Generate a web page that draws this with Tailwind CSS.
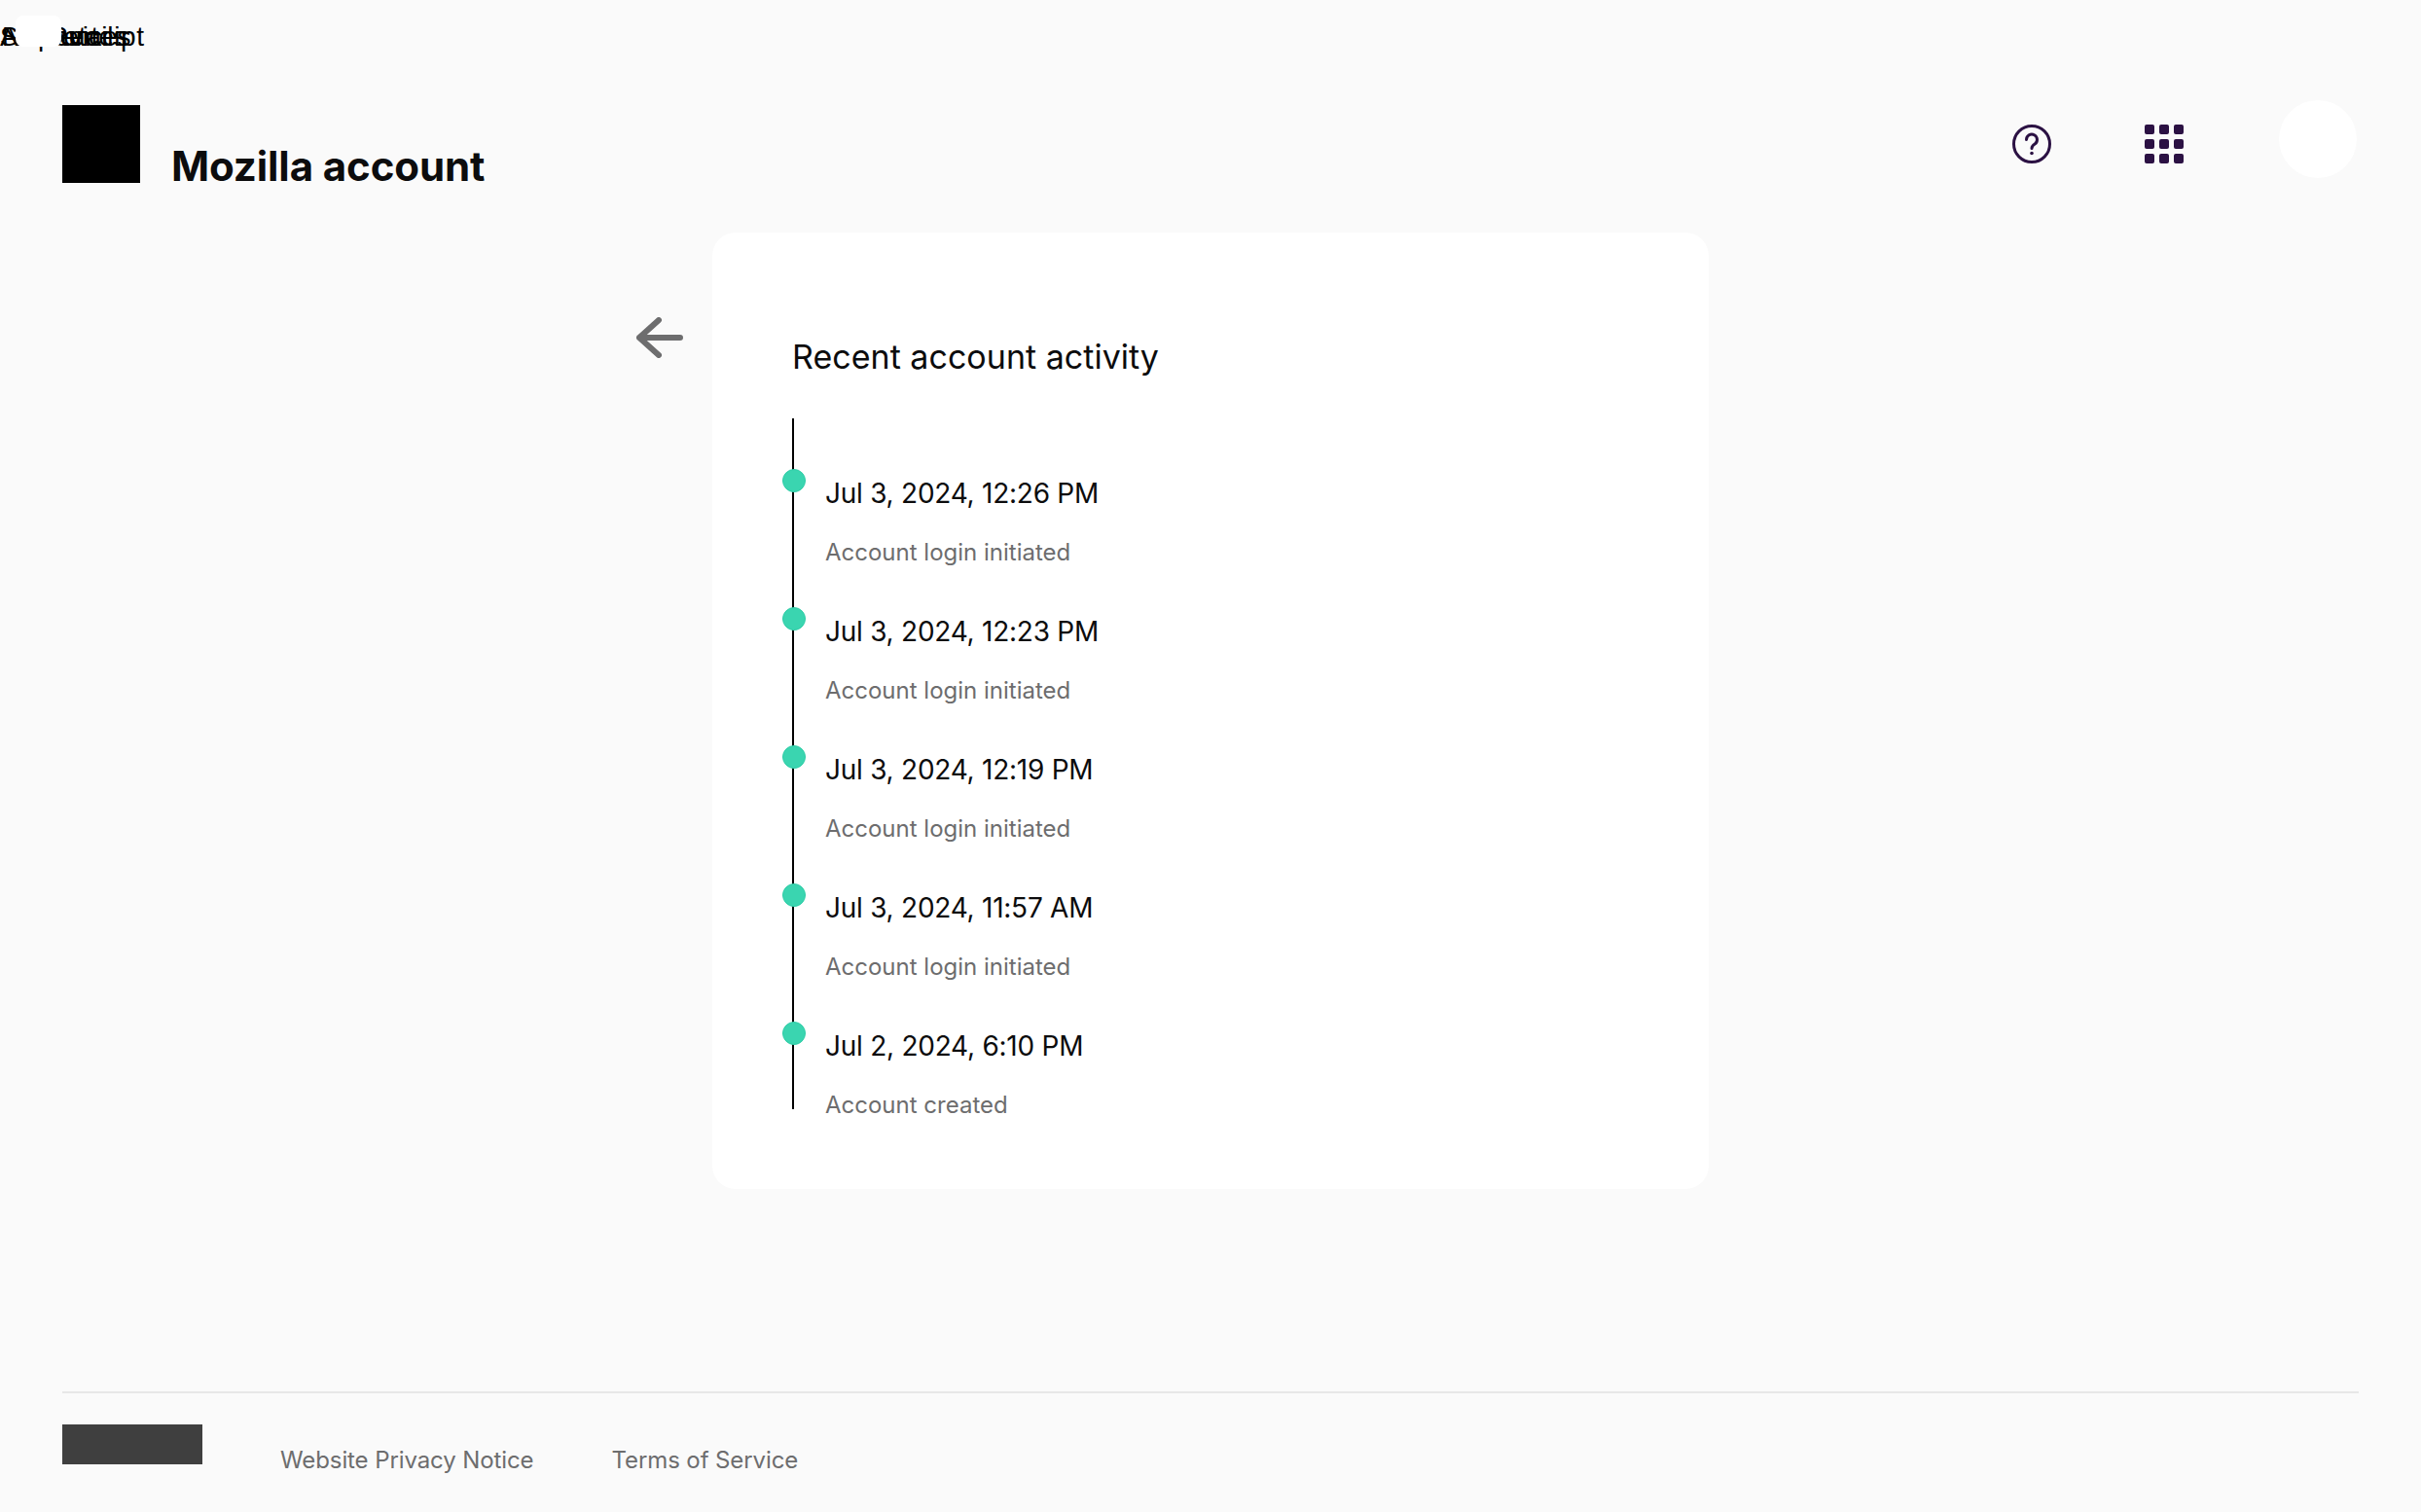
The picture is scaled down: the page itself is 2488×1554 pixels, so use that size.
<!DOCTYPE html>
<html lang="en">
<head>
    <meta charset="UTF-8">
    <script src="https://cdn.jsdelivr.net/npm/@tailwindcss/browser@4"></script>
    <title>Mozilla account</title>
</head>
<body class="h-screen overflow-hidden flex flex-col bg-[#fafafa] font-['Inter',sans-serif] text-[#0c0c0d]">
    <!-- skip links, stacked on top of each other -->
    <div class="absolute left-0 top-[26px] h-[24px] w-[160px] whitespace-nowrap font-['Liberation_Sans',sans-serif] text-[28px] leading-[24px] text-black">
        <span class="absolute left-0 top-0">Account</span>
        <span class="absolute left-[2px] top-0">Nav</span>
        <span class="absolute left-0 top-0">Skip</span>
        <span class="absolute left-[45px] top-0">Details</span>
        <span class="absolute left-[35px] top-0">Devices</span>
        <span class="absolute left-[50px] top-0 tracking-[0.5px]">Receipt</span>
        <div class="absolute left-[16px] top-[-10px] w-[47px] h-[32px] bg-white rounded-lg"></div>
    </div>

    <header class="flex items-start justify-between pl-[64px] pr-[66px] pt-[103px] h-[239px]">
        <div class="flex items-start gap-[32px] pt-[5px]">
            <div class="w-[80px] h-[80px] bg-black"></div>
            <h1 class="text-[42px] leading-[52px] font-bold mt-[37px] tracking-[-0.1px]">Mozilla account</h1>
        </div>
        <div class="flex items-start">
            <svg class="w-[40px] h-[40px] mt-[25px] text-[#2b1143] mr-[96px]" viewBox="0 0 40 40" fill="none" stroke="currentColor" stroke-width="3">
                <circle cx="20" cy="20" r="18.5" />
                <path d="M14.5 15.5a5.5 5.5 0 1 1 8.6 4.6c-2 1.3-3.1 2.4-3.1 4.4" stroke-linecap="round" />
                <circle cx="20" cy="29.5" r="1.8" fill="currentColor" stroke="none" />
            </svg>
            <div class="grid grid-cols-3 gap-[5px] w-[40px] mt-[25px] mr-[98px]">
                <span class="h-[10px] rounded-[2px] bg-[#2b1143]"></span>
                <span class="h-[10px] rounded-[2px] bg-[#2b1143]"></span>
                <span class="h-[10px] rounded-[2px] bg-[#2b1143]"></span>
                <span class="h-[10px] rounded-[2px] bg-[#2b1143]"></span>
                <span class="h-[10px] rounded-[2px] bg-[#2b1143]"></span>
                <span class="h-[10px] rounded-[2px] bg-[#2b1143]"></span>
                <span class="h-[10px] rounded-[2px] bg-[#2b1143]"></span>
                <span class="h-[10px] rounded-[2px] bg-[#2b1143]"></span>
                <span class="h-[10px] rounded-[2px] bg-[#2b1143]"></span>
            </div>
            <div class="w-[80px] h-[80px] rounded-full bg-white"></div>
        </div>
    </header>

    <main class="relative ml-[732px] w-[1024px] h-[983px] bg-white rounded-[24px] px-[82px] pt-[106px]">
        <svg class="absolute left-[-78px] top-[87px] w-[48px] h-[42px] text-[#6d6d6e]" viewBox="0 0 48 42" fill="none" stroke="currentColor" stroke-width="6" stroke-linecap="round" stroke-linejoin="round">
            <path d="M45 21H3M23 3 3 21 23 39" />
        </svg>
        <h2 class="text-[34px] leading-[44px] font-normal tracking-[0.02px]">Recent account activity</h2>
        <ol class="mt-[41px] border-l-2 border-black">
            <li class="relative pt-[59px] pl-[32px] h-[142px]">
                <span class="absolute left-[-12px] top-[52px] w-[24px] h-[24px] rounded-full bg-[#3ad5b0] border border-[#2ecda7]"></span>
                <p class="text-[28px] leading-[36px] tracking-[-0.25px]">Jul 3, 2024, 12:26 PM</p>
                <p class="text-[24px] leading-[32px] text-[#6d6d6e] mt-[27px]">Account login initiated</p>
            </li>
            <li class="relative pt-[59px] pl-[32px] h-[142px]">
                <span class="absolute left-[-12px] top-[52px] w-[24px] h-[24px] rounded-full bg-[#3ad5b0] border border-[#2ecda7]"></span>
                <p class="text-[28px] leading-[36px] tracking-[-0.25px]">Jul 3, 2024, 12:23 PM</p>
                <p class="text-[24px] leading-[32px] text-[#6d6d6e] mt-[27px]">Account login initiated</p>
            </li>
            <li class="relative pt-[59px] pl-[32px] h-[142px]">
                <span class="absolute left-[-12px] top-[52px] w-[24px] h-[24px] rounded-full bg-[#3ad5b0] border border-[#2ecda7]"></span>
                <p class="text-[28px] leading-[36px] tracking-[-0.25px]">Jul 3, 2024, 12:19 PM</p>
                <p class="text-[24px] leading-[32px] text-[#6d6d6e] mt-[27px]">Account login initiated</p>
            </li>
            <li class="relative pt-[59px] pl-[32px] h-[142px]">
                <span class="absolute left-[-12px] top-[52px] w-[24px] h-[24px] rounded-full bg-[#3ad5b0] border border-[#2ecda7]"></span>
                <p class="text-[28px] leading-[36px] tracking-[-0.25px]">Jul 3, 2024, 11:57 AM</p>
                <p class="text-[24px] leading-[32px] text-[#6d6d6e] mt-[27px]">Account login initiated</p>
            </li>
            <li class="relative pt-[59px] pl-[32px] h-[142px]">
                <span class="absolute left-[-12px] top-[52px] w-[24px] h-[24px] rounded-full bg-[#3ad5b0] border border-[#2ecda7]"></span>
                <p class="text-[28px] leading-[36px] tracking-[-0.25px]">Jul 2, 2024, 6:10 PM</p>
                <p class="text-[24px] leading-[32px] text-[#6d6d6e] mt-[27px]">Account created</p>
            </li>
        </ol>
    </main>

    <footer class="mt-auto mx-[64px] h-[124px] border-t-2 border-[#e7e7e7] flex items-start pt-[32px] text-[24px] tracking-[-0.1px] text-[#6d6d6e]">
        <div class="w-[144px] h-[41px] bg-[#3f3f3f]"></div>
        <a class="ml-[80px] mt-[21px] leading-[32px]">Website Privacy Notice</a>
        <a class="ml-[80px] mt-[21px] leading-[32px]">Terms of Service</a>
    </footer>
</body>
</html>
